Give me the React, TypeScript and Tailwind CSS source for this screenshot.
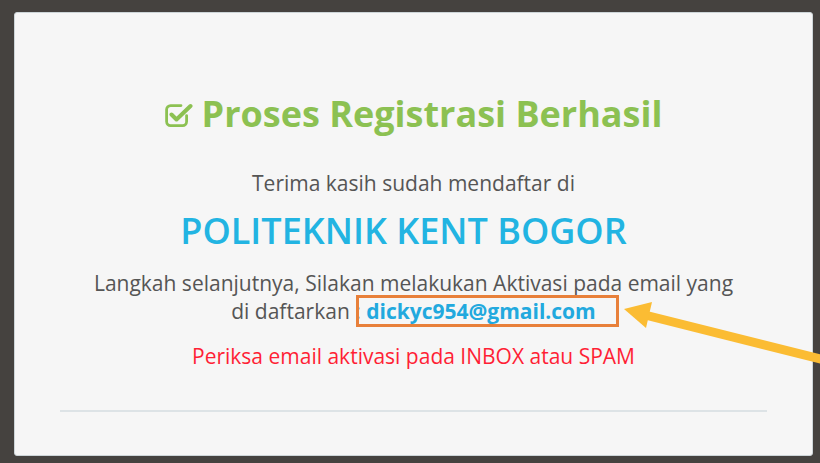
import React from 'react';

function CheckSquareIcon() {
  return (
    <svg width="28" height="26" viewBox="0 0 28 26" className="shrink-0">
      <path
        d="M16 4.6H5.6a4 4 0 0 0-4 4v12a4 4 0 0 0 4 4h12a4 4 0 0 0 4-4v-6"
        fill="none"
        stroke="#8cc152"
        strokeWidth="2.8"
        strokeLinecap="round"
      />
      <path
        d="M6.5 13.5l5 5 14-13.5"
        fill="none"
        stroke="#8cc152"
        strokeWidth="4"
        strokeLinecap="round"
        strokeLinejoin="round"
      />
    </svg>
  );
}

export default function App() {
  return (
    <div
      className="relative w-[820px] h-[463px] overflow-hidden bg-[#45423f] pt-[12px] pl-[14px]"
      style={{ fontFamily: '"Open Sans", "Liberation Sans", sans-serif' }}
    >
      <div className="w-[799px] h-[444px] bg-[#f6f6f6] border border-[#cdd5d8] rounded-[3px] flex flex-col items-center text-center">
        <h1 className="mt-[79px] flex items-center gap-[9px] text-[36px] leading-[44px] font-bold text-[#8cc152]">
          <CheckSquareIcon />
          Proses Registrasi Berhasil
        </h1>

        <p className="mt-[33px] text-[21px] leading-[28px] text-[#555]">
          Terima kasih sudah mendaftar di
        </p>

        <h2 className="mt-[12px] mr-[20px] text-[36px] leading-[44px] font-semibold text-[#22b4e2]">
          POLITEKNIK KENT BOGOR
        </h2>

        <p className="mt-[16px] text-[21px] leading-[28px] text-[#555]">
          Langkah selanjutnya, Silakan melakukan Aktivasi pada email yang
          <br />
          di daftarkan :{' '}
          <span className="relative font-bold text-[#22a9de]">
            dickyc954@gmail.com
            <span className="absolute -left-[10px] -right-[23px] -top-[2px] -bottom-[2px] border-[3px] border-[#e8803a]" />
          </span>
        </p>

        <p className="mt-[17px] text-[21px] leading-[28px] text-[#ff1f35]">
          Periksa email aktivasi pada INBOX atau SPAM
        </p>

        <div className="mt-[40px] w-[707px] h-[2px] bg-[#dde3e6]" />
      </div>

      {/* annotation arrow */}
      <svg className="absolute inset-0 pointer-events-none" width="820" height="463">
        <line x1="645" y1="315" x2="840" y2="364" stroke="#fbbc33" strokeWidth="9" />
        <polygon points="624,309 652,302 646,328" fill="#fbbc33" />
      </svg>
    </div>
  );
}
